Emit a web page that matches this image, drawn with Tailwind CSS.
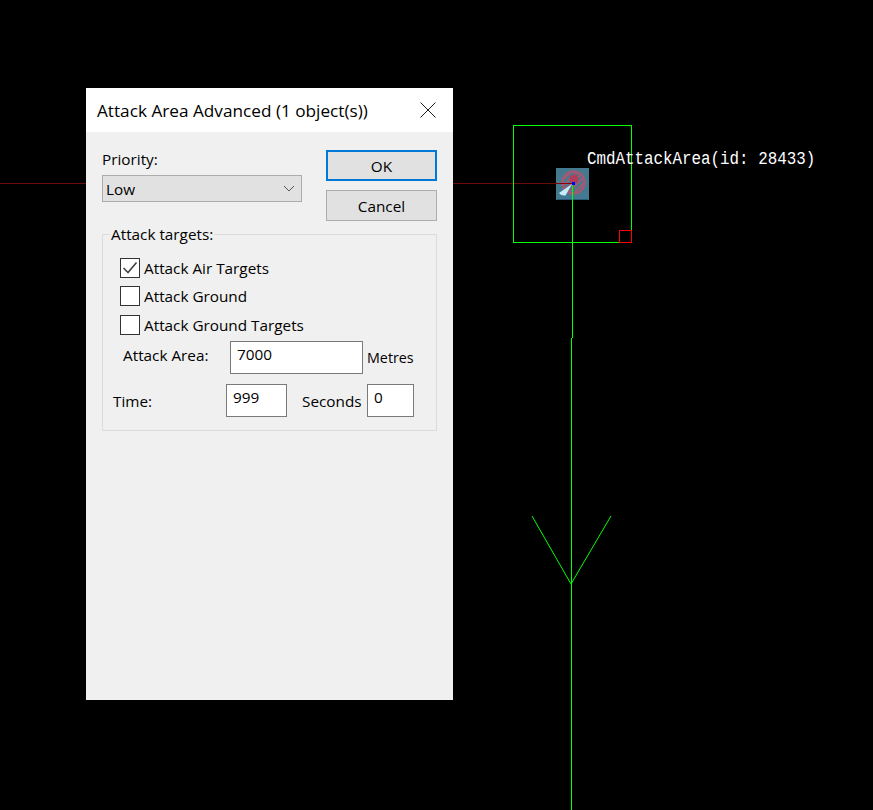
<!DOCTYPE html>
<html lang="en">
<head>
    <meta charset="UTF-8" />
    <title>Attack Area Advanced</title>
    <script src="https://cdn.jsdelivr.net/npm/@tailwindcss/browser@4"></script>
</head>
<body class="bg-black">
    <div class="relative w-[873px] h-[810px] overflow-hidden bg-black font-['Open_Sans','Noto_Sans',sans-serif] text-[15.3px] text-black">
        <!-- editor canvas -->
        <svg class="absolute inset-0" width="873" height="810" viewBox="0 0 873 810" fill="none" shape-rendering="crispEdges">
            <path d="M0 183.5H572" stroke="#6b0c0c" />
            <rect x="513.5" y="125.5" width="118" height="117" stroke="#00ff00" />
            <rect x="619.5" y="230.5" width="12" height="12" stroke="#ff0000" />
            <!-- command icon -->
            <rect x="556" y="168" width="33" height="32" rx="1" fill="#437a90" />
            <path d="M557 199.500H588" stroke="#2b5a78" />
            <g shape-rendering="auto">
                <circle cx="573.500" cy="182.500" r="11" stroke="#a05a74" stroke-width="2.500" />
                <path d="M564 179L570 173M564 185L577 172M565 190L582 173M569 192L584 177M575 192L585 182" stroke="#a05a74" stroke-width="1.800" />
                <circle cx="574" cy="179" r="4.500" fill="#b23c5a" />
                <path d="M559 193L572 184L565.500 195.500Q561 196 559 193Z" fill="#c6ecfa" />
            </g>
            <path d="M556 183.500H572" stroke="#8b0000" />
            <rect x="572" y="182" width="3" height="3" fill="#0000ff" />
            <path d="M572.5 185V338" stroke="#00ff00" />
            <path d="M571.5 338V810" stroke="#00ff00" />
            <path d="M532 516L571 584L611 516" stroke="#00ff00" shape-rendering="auto" />
        </svg>
        <span class="absolute left-[587px] top-[148px] font-['Liberation_Mono',monospace] text-[15.85px] leading-[19px] scale-y-[1.2] origin-top text-white whitespace-nowrap">CmdAttackArea(id: 28433)</span>

        <!-- dialog -->
        <div class="absolute left-[86px] top-[88px] w-[367px] h-[612px] bg-[#f0f0f0] flex flex-col">
            <div class="h-[44px] bg-white flex items-center justify-between pl-[11px] pr-[17px]">
                <span class="whitespace-nowrap text-[17.2px] pt-[2px]">Attack Area Advanced (1 object(s))</span>
                <svg width="16" height="16" viewBox="0 0 16 16" fill="none" stroke="#1a1a1a"><path d="M0.5 0.5L15.5 15.5M15.5 0.5L0.5 15.5" /></svg>
            </div>
            <div class="pl-[16px] pr-[16px] pt-[18px] flex flex-col">
                <div class="flex justify-between h-[84px]">
                    <div class="w-[200px] flex flex-col">
                        <label class="leading-[22px] mt-[-2px] h-[27px]">Priority:</label>
                        <div class="h-[27px] bg-[#e1e1e1] border border-[#adadad] flex items-center justify-between pl-[3px] pr-[6px]">
                            <span class="pt-[1px]">Low</span>
                            <svg width="12" height="7" viewBox="0 0 12 7" fill="none" stroke="#555"><path d="M1 1L6 6L11 1" /></svg>
                        </div>
                    </div>
                    <div class="w-[111px] flex flex-col gap-[9px]">
                        <button class="h-[31px] pt-[1px] bg-[#e1e1e1] border-2 border-[#0078d7]">OK</button>
                        <button class="h-[31px] pt-[1px] bg-[#e1e1e1] border border-[#adadad]">Cancel</button>
                    </div>
                </div>
                <fieldset class="h-[197px] border border-[#dcdcdc] relative">
                    <legend class="absolute left-[7px] top-[-11px] bg-[#f0f0f0] px-[1px] leading-[20px]">Attack targets:</legend>
                    <div class="pt-[23px] pl-[17px] flex flex-col">
                        <div class="h-[20px] flex items-center gap-[4px]">
                            <span class="w-[20px] h-[20px] bg-white border border-[#333] flex items-center justify-center">
                                <svg width="16" height="14" viewBox="0 0 16 14" fill="none" stroke="#444" stroke-width="1.6"><path d="M1.5 7L6 11.5L14.5 1.5" /></svg>
                            </span>
                            <span>Attack Air Targets</span>
                        </div>
                        <div class="h-[20px] mt-[8px] flex items-center gap-[4px]">
                            <span class="w-[20px] h-[20px] bg-white border border-[#333]"></span>
                            <span>Attack Ground</span>
                        </div>
                        <div class="h-[20px] mt-[9px] flex items-center gap-[4px]">
                            <span class="w-[20px] h-[20px] bg-white border border-[#333]"></span>
                            <span>Attack Ground Targets</span>
                        </div>
                    </div>
                    <div class="flex items-center h-[33px] mt-[6px] pl-[20px]">
                        <span class="w-[107px] mb-[4px]">Attack Area:</span>
                        <div class="w-[133px] h-[33px] bg-white border border-[#7a7a7a] pl-[6px] leading-[24px]">7000</div>
                        <span class="ml-[4px] text-[14.3px]">Metres</span>
                    </div>
                    <div class="flex items-center h-[33px] mt-[10px] pl-[10px]">
                        <span class="w-[113px] pt-[1px]">Time:</span>
                        <div class="w-[61px] h-[33px] bg-white border border-[#7a7a7a] pl-[6px] leading-[24px]">999</div>
                        <span class="ml-[15px] w-[65px] pt-[1px]">Seconds</span>
                        <div class="w-[47px] h-[33px] bg-white border border-[#7a7a7a] pl-[6px] leading-[24px]">0</div>
                    </div>
                </fieldset>
            </div>
        </div>
    </div>
</body>
</html>
